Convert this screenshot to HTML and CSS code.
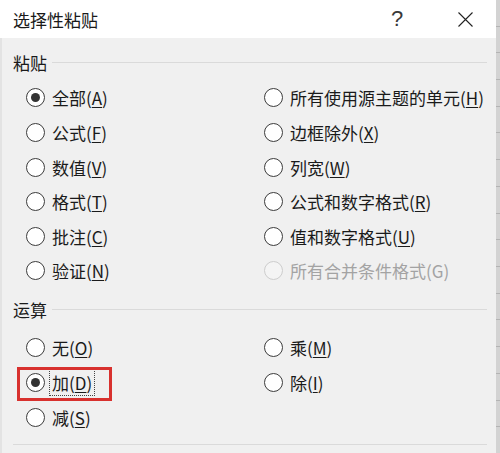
FILE: index.html
```html
<!DOCTYPE html>
<html lang="zh-CN">
<head>
    <meta charset="UTF-8">
    <title>选择性粘贴</title>
    <link rel="stylesheet" href="styles.css">
</head>
<body>
    <div class="screen">
        <div class="dialog">
            <div class="titlebar">
                <span class="title">选择性粘贴</span>
                <span class="help">?</span>
                <span class="close">
                    <svg width="15" height="15" viewBox="0 0 15 15">
                        <path d="M0.5 0.5 L14.5 14.5 M14.5 0.5 L0.5 14.5" stroke="#222" stroke-width="1.1" fill="none"/>
                    </svg>
                </span>
            </div>

            <div class="content">
                <div class="group-head"><span>粘贴</span><i class="rule"></i></div>
                <div class="options paste">
                    <label class="opt"><span class="radio checked"></span><span>全部(<u>A</u>)</span></label>
                    <label class="opt"><span class="radio"></span><span>所有使用源主题的单元(<u>H</u>)</span></label>
                    <label class="opt"><span class="radio"></span><span>公式(<u>F</u>)</span></label>
                    <label class="opt"><span class="radio"></span><span>边框除外(<u>X</u>)</span></label>
                    <label class="opt"><span class="radio"></span><span>数值(<u>V</u>)</span></label>
                    <label class="opt"><span class="radio"></span><span>列宽(<u>W</u>)</span></label>
                    <label class="opt"><span class="radio"></span><span>格式(<u>T</u>)</span></label>
                    <label class="opt"><span class="radio"></span><span>公式和数字格式(<u>R</u>)</span></label>
                    <label class="opt"><span class="radio"></span><span>批注(<u>C</u>)</span></label>
                    <label class="opt"><span class="radio"></span><span>值和数字格式(<u>U</u>)</span></label>
                    <label class="opt"><span class="radio"></span><span>验证(<u>N</u>)</span></label>
                    <label class="opt disabled"><span class="radio"></span><span>所有合并条件格式(G)</span></label>
                </div>

                <div class="group-head ops-head"><span>运算</span><i class="rule"></i></div>
                <div class="options ops">
                    <label class="opt"><span class="radio"></span><span>无(<u>O</u>)</span></label>
                    <label class="opt"><span class="radio"></span><span>乘(<u>M</u>)</span></label>
                    <label class="opt marked"><span class="radio checked"></span><span class="focus">加(<u>D</u>)</span><i class="mark"></i></label>
                    <label class="opt"><span class="radio"></span><span>除(<u>I</u>)</span></label>
                    <label class="opt"><span class="radio"></span><span>减(<u>S</u>)</span></label>
                </div>

                <div class="rule bottom"></div>
            </div>
        </div>
        <div class="edge"></div>
    </div>
</body>
</html>
```

FILE: styles.css
```css
body {
    margin: 0;
    font-family: "Noto Sans CJK SC", "Noto Sans", sans-serif;
    color: #1a1a1a;
    background: #f0f0f0;
}
.screen {
    display: flex;
    width: 500px;
    height: 453px;
    overflow: hidden;
}
.dialog {
    flex: 1;
    display: flex;
    flex-direction: column;
}
.edge {
    width: 4px;
    background: repeating-linear-gradient(to bottom, #d3d3d3 0 25.7px, #b4b4b4 25.7px 26.7px);
}
.titlebar {
    display: flex;
    align-items: center;
    height: 38px;
    background: #ffffff;
    padding-right: 8px;
}
.title {
    padding-left: 13px;
    font-size: 17px;
    line-height: 1;
}
.help {
    margin-left: auto;
    width: 46px;
    text-align: center;
    font-family: "Liberation Sans", sans-serif;
    font-size: 22px;
    color: #3a3a3a;
    line-height: 1;
}
.close {
    width: 46px;
    margin-left: 22px;
    display: flex;
    justify-content: center;
}
.content {
    flex: 1;
    padding: 0 9px 0 13px;
    background: linear-gradient(to right, #e3e3e3 0 2px, #f0f0f0 2px);
}
.group-head {
    display: flex;
    align-items: center;
    height: 24px;
    margin-top: 12px;
    font-size: 17px;
    line-height: 1;
}
.group-head .rule {
    flex: 1;
    margin-left: 5px;
}
.rule {
    display: block;
    height: 1px;
    background: #dadada;
}
.options {
    display: grid;
    grid-template-columns: 238px 1fr;
    grid-auto-rows: 34.6px;
    padding-left: 13px;
    margin-top: 6.7px;
}
.ops-head {
    margin-top: 9.7px;
}
.options.ops {
    margin-top: 8.7px;
}
.bottom {
    margin-top: 9.5px;
}
.opt {
    position: relative;
    display: flex;
    align-items: center;
    font-size: 17px;
    line-height: 1;
    white-space: nowrap;
}
.opt u {
    text-underline-offset: 2px;
    text-decoration-thickness: 1px;
}
.radio {
    box-sizing: border-box;
    width: 19px;
    height: 19px;
    margin-right: 7px;
    border: 1.5px solid #3c3c3c;
    border-radius: 50%;
    background: #ffffff;
    display: flex;
    align-items: center;
    justify-content: center;
    flex: none;
}
.radio.checked::after {
    content: "";
    width: 9px;
    height: 9px;
    border-radius: 50%;
    background: #333;
}
.disabled {
    color: #a3a3a3;
}
.disabled .radio {
    border-color: #cdcdcd;
    background: #f4f4f4;
}
.focus {
    padding: 4px 2px;
    margin-left: -2px;
    outline: 1px dotted #444;
}
.mark {
    position: absolute;
    left: -9px;
    top: 1.7px;
    width: 95px;
    height: 34px;
    box-sizing: border-box;
    border: 3px solid #d8312e;
}
```
